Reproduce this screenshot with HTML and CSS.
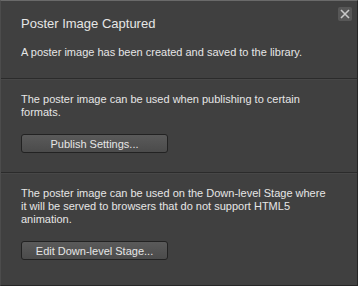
FILE: index.html
```html
<!DOCTYPE html>
<html lang="en">
<head>
    <meta charset="UTF-8">
    <title>Poster Image Captured</title>
    <link rel="stylesheet" href="styles.css">
</head>
<body>
    <div class="panel">
        <button class="close-btn" type="button" aria-label="Close">
            <svg width="10" height="10" viewBox="0 0 10 10">
                <path d="M1 1 L9 9 M9 1 L1 9" stroke="#c8c8c8" stroke-width="1.6"/>
            </svg>
        </button>

        <div class="section first">
            <h2 class="title">Poster Image Captured</h2>
            <p>A poster image has been created and saved to the library.</p>
        </div>

        <div class="section">
            <p>The poster image can be used when publishing to certain formats.</p>
            <button class="action-btn" type="button">Publish Settings...</button>
        </div>

        <div class="section">
            <p>The poster image can be used on the Down-level Stage where it will be served to browsers that do not support HTML5 animation.</p>
            <button class="action-btn" type="button">Edit Down-level Stage...</button>
        </div>
    </div>
</body>
</html>
```

FILE: styles.css
```css
body {
    margin: 0;
    padding: 0;
    background-color: #3f3f3f;
    font-family: "Liberation Sans", Arial, sans-serif;
    font-size: 11px;
    color: #e6e6e6;
}
.panel {
    position: relative;
    width: 358px;
    height: 286px;
    box-sizing: border-box;
    background-color: #404040;
    border-top: 1px solid #6a6a6a;
    border-left: 1px solid #4c4c4c;
    border-right: 1px solid #262626;
    border-bottom: 1px solid #262626;
}
.close-btn {
    position: absolute;
    top: 6px;
    right: 5px;
    width: 14px;
    height: 14px;
    padding: 0;
    border: none;
    border-radius: 2px;
    background-color: #575757;
    display: flex;
    align-items: center;
    justify-content: center;
}
.section {
    padding: 14px 27px 19px 20px;
    border-top: 1px solid #2b2b2b;
    box-shadow: inset 0 1px 0 #474747;
}
.section.first {
    border-top: none;
    box-shadow: none;
    padding-top: 15px;
}
.title {
    margin: 0 0 14px;
    font-size: 13px;
    font-weight: normal;
    line-height: 16px;
}
.section p {
    margin: 0;
    line-height: 13px;
}
.action-btn {
    display: block;
    margin-top: 15px;
    width: 147px;
    height: 19px;
    padding: 0;
    font-family: inherit;
    font-size: 11px;
    color: #e6e6e6;
    border: 1px solid #222;
    border-radius: 3px;
    background: linear-gradient(#5a5a5a, #4b4b4b);
}
```
